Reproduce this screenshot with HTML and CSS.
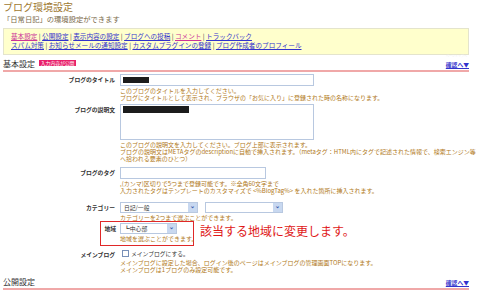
FILE: index.html
```html
<!DOCTYPE html>
<html lang="ja">
<head>
    <meta charset="UTF-8"/>
    <title>ブログ環境設定</title>
    <link rel="stylesheet" href="styles.css">
</head>
<body>
<div class="page">
    <h1 class="page-title">ブログ環境設定</h1>
    <p class="page-lead">「日常日記」の環境設定ができます</p>

    <div class="menu">
        <div>
            <a class="visited" href="#">基本設定</a> | <a href="#">公開設定</a> | <a href="#">表示内容の設定</a> |
            <a href="#">ブログへの投稿</a> | <a class="visited" href="#">コメント</a> | <a href="#">トラックバック</a>
        </div>
        <div>
            <a href="#">スパム対策</a> | <a href="#">お知らせメールの通知設定</a> | <a href="#">カスタムプラグインの登録</a> |
            <a href="#">ブログ作成者のプロフィール</a>
        </div>
    </div>
    <div class="to-top">ページトップへ</div>

    <div class="section-head">
        <h2>基本設定 <span class="badge">入力内容が公開</span></h2>
        <a href="#">確認へ▼</a>
    </div>

    <div class="form">
        <div class="row">
            <div class="label">ブログのタイトル</div>
            <div class="field">
                <div class="input wide"><span class="redact r-title"></span></div>
                <p class="help">このブログのタイトルを入力してください。<br>ブログにタイトルとして表示され、ブラウザの「お気に入り」に登録された時の名称になります。</p>
            </div>
        </div>
        <div class="row">
            <div class="label">ブログの説明文</div>
            <div class="field">
                <div class="input wide area"><span class="redact r-desc"></span></div>
                <p class="help">このブログの説明文を入力してください。ブログ上部に表示されます。<br>ブログの説明文はMETAタグのdescriptionに自動で挿入されます。（metaタグ：HTML内にタグで記述された情報で、検索エンジン等<br>へ拾われる要素のひとつ）</p>
            </div>
        </div>
        <div class="row row-tag">
            <div class="label">ブログのタグ</div>
            <div class="field">
                <div class="input tag"></div>
                <p class="help">,(カンマ)区切りで5つまで登録可能です。※全角60文字まで<br>入力されたタグはテンプレートのカスタマイズで &lt;%BlogTag%&gt; を入れた箇所に挿入されます。</p>
            </div>
        </div>
        <div class="row row-cat">
            <div class="label">カテゴリー</div>
            <div class="field">
                <div class="selects">
                    <div class="select cat">日記/一般<span class="arrow">⌄</span></div>
                    <div class="select cat"><span class="arrow">⌄</span></div>
                </div>
                <p class="help">カテゴリーを2つまで選ぶことができます。</p>
            </div>
        </div>
        <div class="note-wrap">
            <div class="row boxed">
                <div class="label">地域</div>
                <div class="field">
                    <div class="select area-select">┗中心部<span class="arrow">⌄</span></div>
                    <p class="help">地域を選ぶことができます。</p>
                </div>
            </div>
            <div class="note">該当する地域に変更します。</div>
        </div>
        <div class="row">
            <div class="label">メインブログ</div>
            <div class="field">
                <label class="check"><span class="box"></span>メインブログにする。</label>
                <p class="help">メインブログに設定した場合、ログイン後のページはメインブログの管理画面TOPになります。<br>メインブログは1ブログのみ設定可能です。</p>
            </div>
        </div>
    </div>

    <div class="section-head">
        <h2>公開設定</h2>
        <a href="#">確認へ▼</a>
    </div>
</div>
</body>
</html>
```

FILE: styles.css
```css
body {
    margin: 0;
    background-color: #fff;
    font-family: "Noto Sans CJK JP", "Noto Sans", sans-serif;
}

.page {
    width: 466px;
    padding: 1px 3px 0;
}

.page-title {
    margin: 0;
    font-size: 10px;
    line-height: 12px;
    font-weight: normal;
    color: #a07830;
}

.page-lead {
    margin: 1px 0 0;
    font-size: 7.3px;
    line-height: 11px;
    color: #7a6a4a;
}

.menu {
    margin-top: 3px;
    height: 27px;
    box-sizing: border-box;
    background-color: #ffffcc;
    border: 1px solid #e4e4cc;
    padding: 3px 7px;
    font-size: 6.6px;
    line-height: 9px;
    color: #444;
}

.menu a {
    color: #3333cc;
}

.menu a.visited {
    color: #cc3399;
}

.to-top {
    text-align: right;
    font-size: 3px;
    line-height: 3px;
    color: #ececec;
    padding-right: 2px;
}

.section-head {
    display: flex;
    justify-content: space-between;
    align-items: flex-end;
    border-bottom: 2px solid #f0a8a8;
    padding: 0 0 1px;
}

.section-head h2 {
    margin: 0;
    font-size: 8px;
    line-height: 11px;
    font-weight: normal;
    color: #333;
}

.section-head a {
    font-size: 5.8px;
    color: #3333cc;
    font-weight: bold;
    line-height: 8px;
}

.badge {
    display: inline-block;
    background-color: #e8206a;
    color: #fff;
    font-size: 4.8px;
    line-height: 6px;
    padding: 0 2px;
    margin-left: 2px;
    vertical-align: 2px;
}

.form {
    padding-top: 2px;
}

.row {
    display: grid;
    grid-template-columns: 112px 1fr;
    column-gap: 5px;
    margin-bottom: 3px;
}

.label {
    text-align: right;
    font-size: 5.8px;
    line-height: 12px;
    font-weight: bold;
    color: #333;
}

.input {
    border: 1px solid #b8c8e0;
    height: 12px;
    box-sizing: border-box;
    background-color: #fff;
}

.input.wide {
    width: 194px;
}

.input.area {
    height: 36px;
}

.input.tag {
    width: 146px;
}

.redact {
    display: block;
    background-color: #1c1c1c;
    margin: 2px 0 0 2px;
}

.r-title {
    width: 26px;
    height: 6px;
}

.r-desc {
    width: 66px;
    height: 7px;
    margin-top: 1px;
}

.help {
    margin: 1px 0 0;
    font-size: 6px;
    line-height: 7px;
    color: #b07818;
    white-space: nowrap;
}

.row-tag {
    margin-top: 5px;
}

.row-cat {
    margin-top: 8px;
    margin-bottom: 0;
}

.selects {
    display: flex;
    gap: 7px;
}

.select {
    border: 1px solid #b8c8e0;
    height: 11px;
    box-sizing: border-box;
    font-size: 5.8px;
    line-height: 9px;
    padding-left: 3px;
    color: #333;
    position: relative;
}

.select.cat {
    width: 78px;
}

.select.area-select {
    width: 57px;
}

.arrow {
    position: absolute;
    right: 0;
    top: 0;
    width: 9px;
    height: 9px;
    background-color: #c8d8f0;
    color: #3355aa;
    font-size: 6px;
    line-height: 6px;
    text-align: center;
    font-weight: bold;
}

.note-wrap {
    display: flex;
    align-items: flex-start;
    gap: 6px;
    margin-bottom: 3px;
}

.row.boxed {
    width: 94px;
    height: 25px;
    box-sizing: border-box;
    grid-template-columns: 13px 1fr;
    column-gap: 4px;
    border: 1px solid #e02828;
    margin: 0 0 0 97px;
    padding: 1px 0 0 2px;
}

.row.boxed .label {
    line-height: 11px;
}

.note {
    font-size: 12px;
    line-height: 14px;
    color: #e01818;
    padding-top: 3px;
}

.check {
    display: flex;
    align-items: center;
    height: 9px;
    font-size: 5.8px;
    line-height: 9px;
    color: #333;
}

.box {
    width: 5px;
    height: 5px;
    border: 1px solid #7890b8;
    margin: 0 2px;
}
```
